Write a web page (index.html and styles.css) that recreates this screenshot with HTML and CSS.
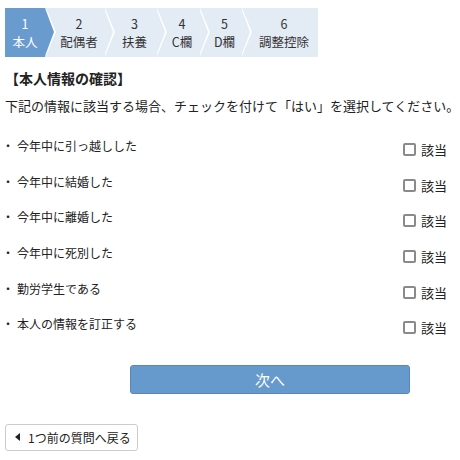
FILE: index.html
```html
<!DOCTYPE html>
<html lang="ja">
<head>
<meta charset="utf-8">
<link rel="stylesheet" href="styles.css">
</head>
<body>
<div class="page">
  <ol class="steps">
    <li class="step active s1"><span>1</span><span>本人</span></li>
    <li class="step s2"><span>2</span><span>配偶者</span></li>
    <li class="step s3"><span>3</span><span>扶養</span></li>
    <li class="step s4"><span>4</span><span>C欄</span></li>
    <li class="step s5"><span>5</span><span>D欄</span></li>
    <li class="step s6 last"><span>6</span><span>調整控除</span></li>
  </ol>
  <h2 class="title">【本人情報の確認】</h2>
  <p class="lead">下記の情報に該当する場合、チェックを付けて「はい」を選択してください。</p>
  <ul class="items">
    <li class="item"><span class="label"><span class="dot">・</span>今年中に引っ越しした</span><label class="check"><span class="box"></span>該当</label></li>
    <li class="item"><span class="label"><span class="dot">・</span>今年中に結婚した</span><label class="check"><span class="box"></span>該当</label></li>
    <li class="item"><span class="label"><span class="dot">・</span>今年中に離婚した</span><label class="check"><span class="box"></span>該当</label></li>
    <li class="item"><span class="label"><span class="dot">・</span>今年中に死別した</span><label class="check"><span class="box"></span>該当</label></li>
    <li class="item"><span class="label"><span class="dot">・</span>勤労学生である</span><label class="check"><span class="box"></span>該当</label></li>
    <li class="item"><span class="label"><span class="dot">・</span>本人の情報を訂正する</span><label class="check"><span class="box"></span>該当</label></li>
  </ul>
  <div class="next-wrap"><button class="next">次へ</button></div>
  <button class="back"><span class="tri"></span>1つ前の質問へ戻る</button>
</div>
</body>
</html>
```
FILE: styles.css
```css
* { box-sizing: border-box; }
html, body { margin: 0; padding: 0; background: #fff; }
body {
  font-family: "Noto Sans CJK JP", "Noto Sans", sans-serif;
  color: #222;
}
.page { padding: 8px 5px 0 5px; }

.steps {
  list-style: none;
  margin: 0;
  padding: 0;
  display: flex;
  height: 49px;
}
.step {
  position: relative;
  height: 49px;
  background: #e3ebf5;
  color: #333;
  display: flex;
  flex-direction: column;
  align-items: center;
  justify-content: center;
  font-size: 12.5px;
  line-height: 18px;
  padding-left: 9px;
}
.step span { display: block; height: 18px; }
.step.active { background: #6a9bcf; color: #fff; padding-left: 0; }
.step::before,
.step::after {
  content: "";
  position: absolute;
  top: 0;
  left: 100%;
  width: 0;
  height: 0;
  border-top: 24.5px solid transparent;
  border-bottom: 24.5px solid transparent;
  z-index: 2;
}
.step::before {
  border-left: 10px solid #fff;
  margin-left: 1px;
}
.step::after {
  border-left: 9px solid #e3ebf5;
  z-index: 3;
}
.step.active::after { border-left-color: #6a9bcf; }
.step.last::before, .step.last::after { display: none; }
.s1 { width: 40px; }
.s2 { width: 59px; }
.s3 { width: 52px; }
.s4 { width: 43px; }
.s5 { width: 42px; }
.s6 { width: 77px; }

.title {
  margin: 11px 0 0 0;
  font-size: 14px;
  line-height: 20px;
  font-weight: bold;
  color: #222;
}
.lead {
  margin: 8px 0 0 0;
  font-size: 13px;
  line-height: 20px;
  white-space: nowrap;
}

.items {
  list-style: none;
  margin: 12px 0 0 0;
  padding: 0;
}
.item {
  height: 35.6px;
  display: flex;
  align-items: center;
  justify-content: space-between;
  font-size: 12px;
}
.label { display: flex; align-items: center; }
.dot { width: 15px; display: inline-block; margin-left: -3px; }
.check {
  display: flex;
  align-items: center;
  margin-top: 8px;
  margin-right: 8px;
  font-size: 13px;
}
.box {
  width: 13px;
  height: 13px;
  border: 2px solid #8a8a8a;
  border-radius: 2px;
  margin-right: 5px;
  background: #fff;
}

.next-wrap {
  display: flex;
  padding-left: 125px;
  margin-top: 23px;
}
.next {
  width: 280px;
  height: 29px;
  background: #6699cc;
  border: 1px solid #5a87b8;
  border-radius: 3px;
  color: #fff;
  font-family: inherit;
  font-size: 15px;
  padding: 0;
}
.back {
  margin-top: 30px;
  display: flex;
  align-items: center;
  height: 27px;
  width: 133px;
  background: #fff;
  border: 1px solid #ccc;
  border-radius: 3px;
  font-family: inherit;
  font-size: 12px;
  color: #222;
  padding: 0 0 0 9px;
}
.tri {
  width: 0;
  height: 0;
  border-top: 4px solid transparent;
  border-bottom: 4px solid transparent;
  border-right: 5px solid #222;
  margin-right: 8px;
}
```
